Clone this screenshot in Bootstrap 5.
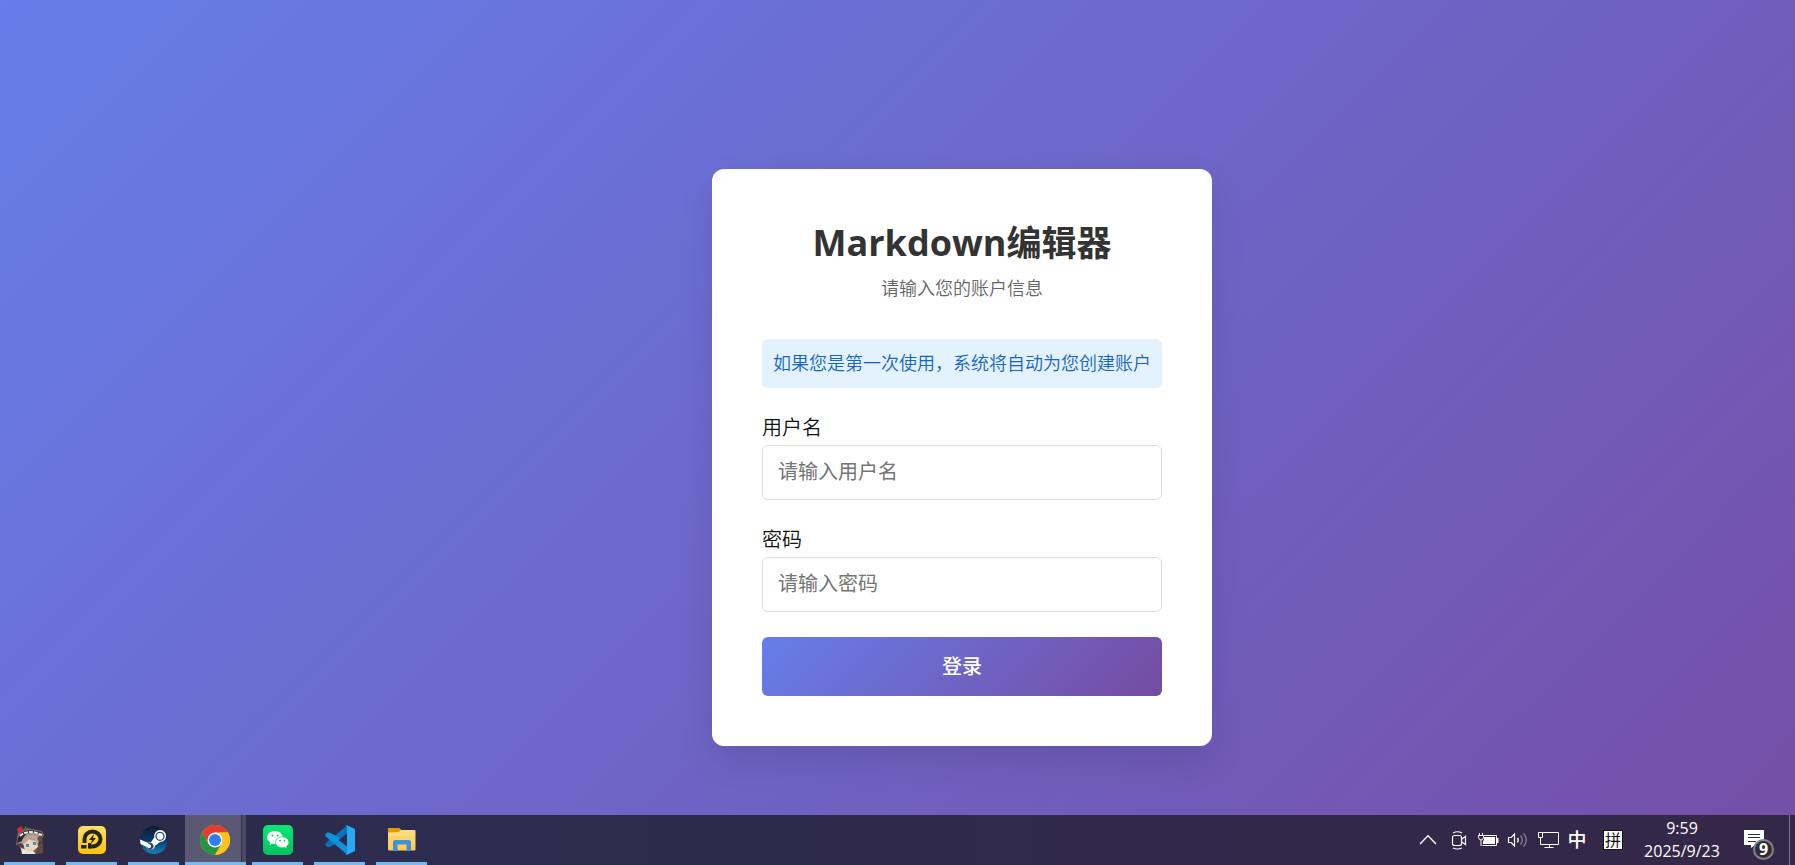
<!DOCTYPE html>
<html lang="zh-CN">
<head>
<meta charset="utf-8">
<meta name="viewport" content="width=device-width, initial-scale=1">
<title>Markdown编辑器</title>
<link href="https://cdn.jsdelivr.net/npm/bootstrap@5.3.0/dist/css/bootstrap.min.css" rel="stylesheet">
<style>
  body { font-family: "Open Sans", "Noto Sans CJK SC", sans-serif; }

  /* login page */
  .login-page { background: linear-gradient(135deg, #667eea 0%, #764ba2 100%) 0 0 / calc(100% + 130px) calc(100% + 100px) no-repeat; padding: 100px 0 0 129px; }
  .login-card { width: 500px; padding: 50px; border-radius: 12px; box-shadow: 0 15px 35px rgba(0,0,0,.1); color: #333; }
  .login-title { font-size: 35px; line-height: 48px; font-weight: 700; margin-bottom: 7px; }
  .login-title span { font-size: 36px; }
  .login-sub { font-size: 18px; line-height: 28px; font-weight: 350; color: #666; margin-bottom: 37px; }
  .first-tip { font-size: 18px; line-height: 27px; font-weight: 350; padding: 11px; border-radius: 6px; background: #e3f2fd; color: #1565c0; margin-bottom: 25px; }
  .field { margin-bottom: 25px; }
  .field-label { font-size: 20px; line-height: 30px; font-weight: 350; color: #111; margin-bottom: 2px; }
  .field-box { height: 55px; padding: 0 15px 2px; font-size: 20px; border: 1px solid #ddd; border-radius: 6px; }
  .field-box::placeholder { color: #757575; }
  .login-btn { height: 59px; font-size: 20px; font-weight: 500; border: 0; border-radius: 6px; background: linear-gradient(135deg, #667eea 0%, #764ba2 100%); }
  .login-btn, .login-btn:hover { color: #fff; }

  /* taskbar */
  .taskbar { height: 50px; background: linear-gradient(90deg, #2d2b46, #2d2b50 25%, #2f2a4c 50%, #352748); }
  .taskbar button { border: 0; background: none; padding: 0; color: #fff; }
  .app-cell { width: 62px; padding: 0 7px 0 4px; }
  .taskbar .app-btn { border-bottom: 3px solid #76b9ed; padding-top: 3px; }
  .app-cell.current { width: 63px; margin-left: -1px; padding: 0 2px 0 0; }
  .current .app-btn { padding-right: 2px; background: linear-gradient(90deg, #5b5873 56px, #2f2d45 56px, #2f2d45 57px, #4a4862 57px); }
  .tray-btn { width: 30px; }
  .ime-lang { width: 28px; font-size: 19px; font-weight: 500; }
  .taskbar .ime-mode { width: 20px; height: 20px; margin: 0 14px 0 12px; background: #fff; border: 1px solid #111; color: #111; font-size: 16px; line-height: 16px; }
  .clock { width: 90px; font-size: 16px; line-height: 23px; }
  .notice { width: 62px; }
  .notice-icon { margin-left: 17px; }
  .notice-count { left: 26px; top: 24px; width: 21px; height: 21px; border: 2px solid #85838a; border-radius: 50%; background: #2e2e33; font-size: 16px; line-height: 17px; font-weight: 700; }
  .taskbar .peek { width: 6px; border-left: 1px solid #7d748b; }
</style>
</head>
<body>
<div class="d-flex flex-column min-vh-100">
  <main class="login-page flex-grow-1 d-flex justify-content-center align-items-center">
    <form class="login-card bg-white">
      <h1 class="login-title text-center"><span>Markdown</span>编辑器</h1>
      <p class="login-sub text-center">请输入您的账户信息</p>
      <div class="first-tip text-nowrap">如果您是第一次使用，系统将自动为您创建账户</div>
      <div class="field">
        <label class="field-label d-block" for="username">用户名</label>
        <input class="field-box form-control" id="username" type="text" placeholder="请输入用户名">
      </div>
      <div class="field">
        <label class="field-label d-block" for="password">密码</label>
        <input class="field-box form-control" id="password" type="password" placeholder="请输入密码">
      </div>
      <button class="login-btn btn w-100" type="button">登录</button>
    </form>
  </main>

  <footer class="taskbar d-flex justify-content-between text-white">
    <nav class="d-flex" aria-label="Apps">
      <div class="app-cell d-flex"><button class="app-btn flex-fill d-flex align-items-center justify-content-center" type="button" aria-label="Game">
        <svg width="30" height="30" viewBox="0 0 30 30">
          <path d="M3 6l9-3 15 3 2 4-2 4 1 14-20 1-4-8-3-1z" fill="#7d6660"/>
          <path d="M20 8l7 3 1 17-7 1z" fill="#67493d"/>
          <path d="M3 14C5 6 12 3 20 6l6 3-3 4-9-1-5 5-4 5z" fill="#a99288"/>
          <path d="M2 18C3 9 8 5 16 5l10 2 2 3-8-2c-8-1-11 2-13 8z" fill="#252733"/>
          <path d="M5 11c4-4 12-6 22-1" fill="none" stroke="#eee8df" stroke-width="2" stroke-dasharray="4 1"/>
          <path d="M1 20l5-2 4 4-2 1zM22 16l3 4 2-4" fill="#473e44"/>
          <path d="M8 18l6-4 8 2 1 6-5 4-8-1z" fill="#efd4c5"/>
          <path d="M7 15l8-5 6 1 3 6-2 2-3-5-2 3-1-4-7 6z" fill="#bea69a"/>
          <path d="M11 19h3v3h-3zM18 17h3v3h-3z" fill="#3d9a99"/>
          <path d="M6 23l5 2 7 1 3 3H7z" fill="#e9e5df"/>
          <path d="M2 4l4-3 2 3-1 4-4-1z" fill="#d2293f"/><path d="M8 4l3-3 1 3-4 3z" fill="#3f6c43"/>
        </svg></button></div>
      <div class="app-cell d-flex"><button class="app-btn flex-fill d-flex align-items-center justify-content-center" type="button" aria-label="Player">
        <svg width="30" height="30" viewBox="0 0 30 30">
          <defs><linearGradient id="gold" x2="0" y2="1"><stop stop-color="#ffdf64"/><stop offset="1" stop-color="#ffc20e"/></linearGradient></defs>
          <rect x="1" y="1" width="28" height="28" rx="5" fill="url(#gold)"/>
          <path d="M7.500 18v-4a8 7.500 0 1 1 8 7.500H12" fill="none" stroke="#252622" stroke-width="4"/>
          <path d="M4 20h5.500v3.500H4zM11 18h3v5.500h-3z" fill="#252622"/>
          <path d="M17 9l-5 6h3l-1 4 5-6h-3z" fill="#252622"/>
        </svg></button></div>
      <div class="app-cell d-flex"><button class="app-btn flex-fill d-flex align-items-center justify-content-center" type="button" aria-label="Steam">
        <svg width="30" height="30" viewBox="0 0 30 30">
          <defs><linearGradient id="deep" x2="0" y2="1"><stop stop-color="#111c33"/><stop offset=".5" stop-color="#0b3464"/><stop offset="1" stop-color="#1387b8"/></linearGradient></defs>
          <circle cx="15" cy="15" r="14" fill="url(#deep)"/>
          <path d="M1 14.500l8 3.300 3-.6 3.300-5A6 6 0 1 1 21 17l-5 3.700a4.500 4.500 0 0 1-8.700 1L1.500 19z" fill="#fff"/>
          <circle cx="21" cy="11.300" r="4" fill="none" stroke="#274a6d" stroke-width="1.300"/>
          <path d="M8.800 18.600l2.300 1a1.800 1.800 0 0 1-1.400 3.300l-2-.8a3.500 3.500 0 1 0 1.100-3.500z" fill="#274a6d"/>
        </svg></button></div>
      <div class="app-cell current d-flex"><button class="app-btn flex-fill d-flex align-items-center justify-content-center" type="button" aria-label="Chrome">
        <svg width="30" height="30" viewBox="0 0 30 30">
          <circle cx="15" cy="15" r="15" fill="#fbc116"/>
          <path d="M2 7.500A15 15 0 0 1 28 7.500H15L8.500 18.800z" fill="#e33b2e"/>
          <path d="M2 7.500A15 15 0 0 0 15 30l6.500-11.200-6.500-1-6.500 1z" fill="#259442"/>
          <path d="M28 7.500A15 15 0 0 1 15 30l6.500-11.200L19 7.500z" fill="#fcc31b"/>
          <circle cx="15" cy="15" r="7.500" fill="#fff"/><circle cx="15" cy="15" r="6" fill="#2e7df0"/>
        </svg></button></div>
      <div class="app-cell d-flex"><button class="app-btn flex-fill d-flex align-items-center justify-content-center" type="button" aria-label="微信">
        <svg width="30" height="30" viewBox="0 0 30 30">
          <defs><linearGradient id="leaf" x2="0" y2="1"><stop stop-color="#04e873"/><stop offset="1" stop-color="#06c25d"/></linearGradient></defs>
          <rect width="30" height="30" rx="5" fill="url(#leaf)"/>
          <path d="M12 6c4.300 0 7.700 2.800 7.700 6.600S16.300 19 12 19l-2.500-.4L6.600 20l.7-2.500C5.400 16.300 4 14.600 4 12.600 4 8.800 7.600 6 12 6z" fill="#fff"/>
          <circle cx="9.400" cy="10.500" r="1" fill="#05cb62"/><circle cx="14.700" cy="10.500" r="1" fill="#05cb62"/>
          <path d="M19.200 11.700c3.700 0 6.700 2.500 6.700 5.600 0 1.700-1 3.200-2.500 4.200l.6 2-2.300-1.100-2.500.4c-3.700 0-6.600-2.400-6.600-5.500s3-5.600 6.600-5.600z" fill="#fff" stroke="#05d368" stroke-width=".7"/>
          <circle cx="17" cy="15.700" r=".9" fill="#05cb62"/><circle cx="21.400" cy="15.700" r=".9" fill="#05cb62"/>
        </svg></button></div>
      <div class="app-cell d-flex"><button class="app-btn flex-fill d-flex align-items-center justify-content-center" type="button" aria-label="Visual Studio Code">
        <svg width="30" height="30" viewBox="0 0 30 30">
          <path d="M22 .5L29 3.500v6L4.500 22 2.200 22 .4 20.300v-1.800z" fill="#0a73b8"/>
          <path d="M22 29.500l7-3v-6L4.500 7.500 2.200 7.600.4 9.300v2z" fill="#0f91dc"/>
          <path d="M22 .3l6.800 3.100c.7.300 1.200 1 1.200 1.700v19.800c0 .7-.5 1.400-1.200 1.700L22 29.700c-.9.400-1.500.1-2-.5.700.6 2 .1 2-1V2c0-1.200-1.300-1.700-2-1 .5-.7 1.100-1.100 2-.7z" fill="#28a9f2"/>
          <path d="M22 8.500v13L13.500 15z" fill="#2d2b4d"/>
        </svg></button></div>
      <div class="app-cell d-flex"><button class="app-btn flex-fill d-flex align-items-center justify-content-center" type="button" aria-label="文件资源管理器">
        <svg width="30" height="30" viewBox="0 0 30 30">
          <defs><linearGradient id="file" x2="0" y2="1"><stop stop-color="#ffe08b"/><stop offset="1" stop-color="#fcc946"/></linearGradient></defs>
          <path d="M1 4q0-1 1-1h10l2 2h13.500q1 0 1 1v18.500q0 1-1 1H2q-1 0-1-1z" fill="url(#file)"/>
          <path d="M1 7.500V4q0-1 1-1h10.500l1.500 2-2 2z" fill="#e09b06"/>
          <path d="M6 26V17.500Q6 15 8.500 15h13q2.500 0 2.500 2.500V26h-4.500v-6.500h-9V26z" fill="#3c91dc"/>
        </svg></button></div>
    </nav>

    <div class="d-flex align-items-center">
      <button class="tray-btn" type="button" aria-label="Show hidden icons"><svg width="30" height="30" viewBox="0 0 30 30" fill="none" stroke="#fff" stroke-width="1.300"><path d="M7 19l8-8.200 8 8.200"/></svg></button>
      <button class="tray-btn" type="button" aria-label="Meet now"><svg width="30" height="30" viewBox="0 0 30 30" fill="none" stroke="#fff"><rect x="9.500" y="10.500" width="9" height="10" rx="2" stroke-width="1.200"/><path d="M18.500 14.200l4-2.700v8l-4-2.700M10 8q4.500-2.500 9 0M10 23q4.500 2 9 0" stroke-width="1.200"/></svg></button>
      <button class="tray-btn" type="button" aria-label="Battery"><svg width="30" height="30" viewBox="0 0 30 30" fill="none" stroke="#fff"><path d="M11 10.500h12.500v10h-14"/><path d="M11 12h11v7H10v-3l1-1z" fill="#fff" stroke="none"/><path d="M24 13h1.500v5H24z" fill="#fff" stroke="none"/><path d="M6.500 8v2M9.500 8v2M5.500 10.500h5v2q0 2-2.500 2.500-2.500-.5-2.500-2.500zM8 15v6"/></svg></button>
      <button class="tray-btn" type="button" aria-label="Volume"><svg width="30" height="30" viewBox="0 0 30 30" fill="none" stroke="#fff"><path d="M5.500 12.500h2.700l3.300-3.500v12l-3.300-3.500H5.500z" stroke-width="1.200"/><path d="M14.500 13q1.500 2 0 4.500" stroke-width="1.300"/><path d="M17.500 10.500q3.800 4.500 0 9M20.500 8.500q5.600 6.500 0 13" stroke="#8d8499" stroke-width="1.200"/></svg></button>
      <button class="tray-btn" type="button" aria-label="Network"><svg width="30" height="30" viewBox="0 0 30 30" fill="none" stroke="#fff"><path d="M10 7.500h15.500v12h-18V14M16.500 19.500v3M11.500 22.500h9M5.500 7.500h4v5h-4zM7.500 12.500v3"/></svg></button>
      <button class="ime-lang" type="button">中</button>
      <button class="ime-mode" type="button">拼</button>
      <button class="clock text-center" type="button">9:59<br>2025/9/23</button>
      <button class="notice position-relative align-self-stretch d-flex align-items-center" type="button" aria-label="Notifications">
        <svg class="notice-icon" width="20" height="20" viewBox="0 0 20 20"><path d="M0 0h20v15h-9l-4 3v-3H0z" fill="#fff"/><path d="M4 4.500h12M4 7.500h12M4 11.500h8" stroke="#352748"/></svg>
        <span class="notice-count position-absolute text-center">9</span>
      </button>
      <button class="peek align-self-stretch" type="button" aria-label="Show desktop"></button>
    </div>
  </footer>
</div>
<script src="https://cdn.jsdelivr.net/npm/bootstrap@5.3.0/dist/js/bootstrap.bundle.min.js"></script>
</body>
</html>
